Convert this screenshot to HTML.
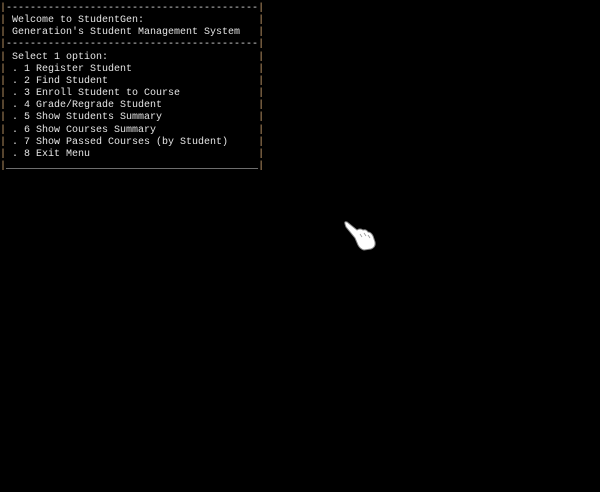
<!DOCTYPE html>
<html><head><style>
html,body{margin:0;padding:0;background:#000;width:600px;height:492px;overflow:hidden}
pre{position:absolute;left:0;top:3px;margin:0;font-family:"Liberation Mono",monospace;font-size:10px;line-height:12.15px;color:#e4e4e4;letter-spacing:0}
.b{color:#d0a470}
</style></head><body>
<pre><span class="b">|</span>------------------------------------------<span class="b">|</span>
<span class="b">|</span> Welcome to StudentGen:                   <span class="b">|</span>
<span class="b">|</span> Generation's Student Management System   <span class="b">|</span>
<span class="b">|</span>------------------------------------------<span class="b">|</span>
<span class="b">|</span> Select 1 option:                         <span class="b">|</span>
<span class="b">|</span> . 1 Register Student                     <span class="b">|</span>
<span class="b">|</span> . 2 Find Student                         <span class="b">|</span>
<span class="b">|</span> . 3 Enroll Student to Course             <span class="b">|</span>
<span class="b">|</span> . 4 Grade/Regrade Student                <span class="b">|</span>
<span class="b">|</span> . 5 Show Students Summary                <span class="b">|</span>
<span class="b">|</span> . 6 Show Courses Summary                 <span class="b">|</span>
<span class="b">|</span> . 7 Show Passed Courses (by Student)     <span class="b">|</span>
<span class="b">|</span> . 8 Exit Menu                            <span class="b">|</span>
<span class="b">|</span>__________________________________________<span class="b">|</span></pre>
<svg style="position:absolute;left:340px;top:218px" width="40" height="36" viewBox="0 0 40 36">
<g fill="#fff" stroke="#888" stroke-width="1">
<path d="M5 6 Q4 3 7 4 L17 12 Q20 10 23 12 Q26 11 28 14 Q31 14 33 18 L35 24 Q36 29 31 31 L24 32 Q20 31 18 27 L15 20 L6 9 Z"/>
</g>
<g fill="none" stroke="#999" stroke-width="0.8"><path d="M20 16 l2 3 M24 15 l2 3 M28 17 l2 3"/></g>
</svg>
</body></html>
